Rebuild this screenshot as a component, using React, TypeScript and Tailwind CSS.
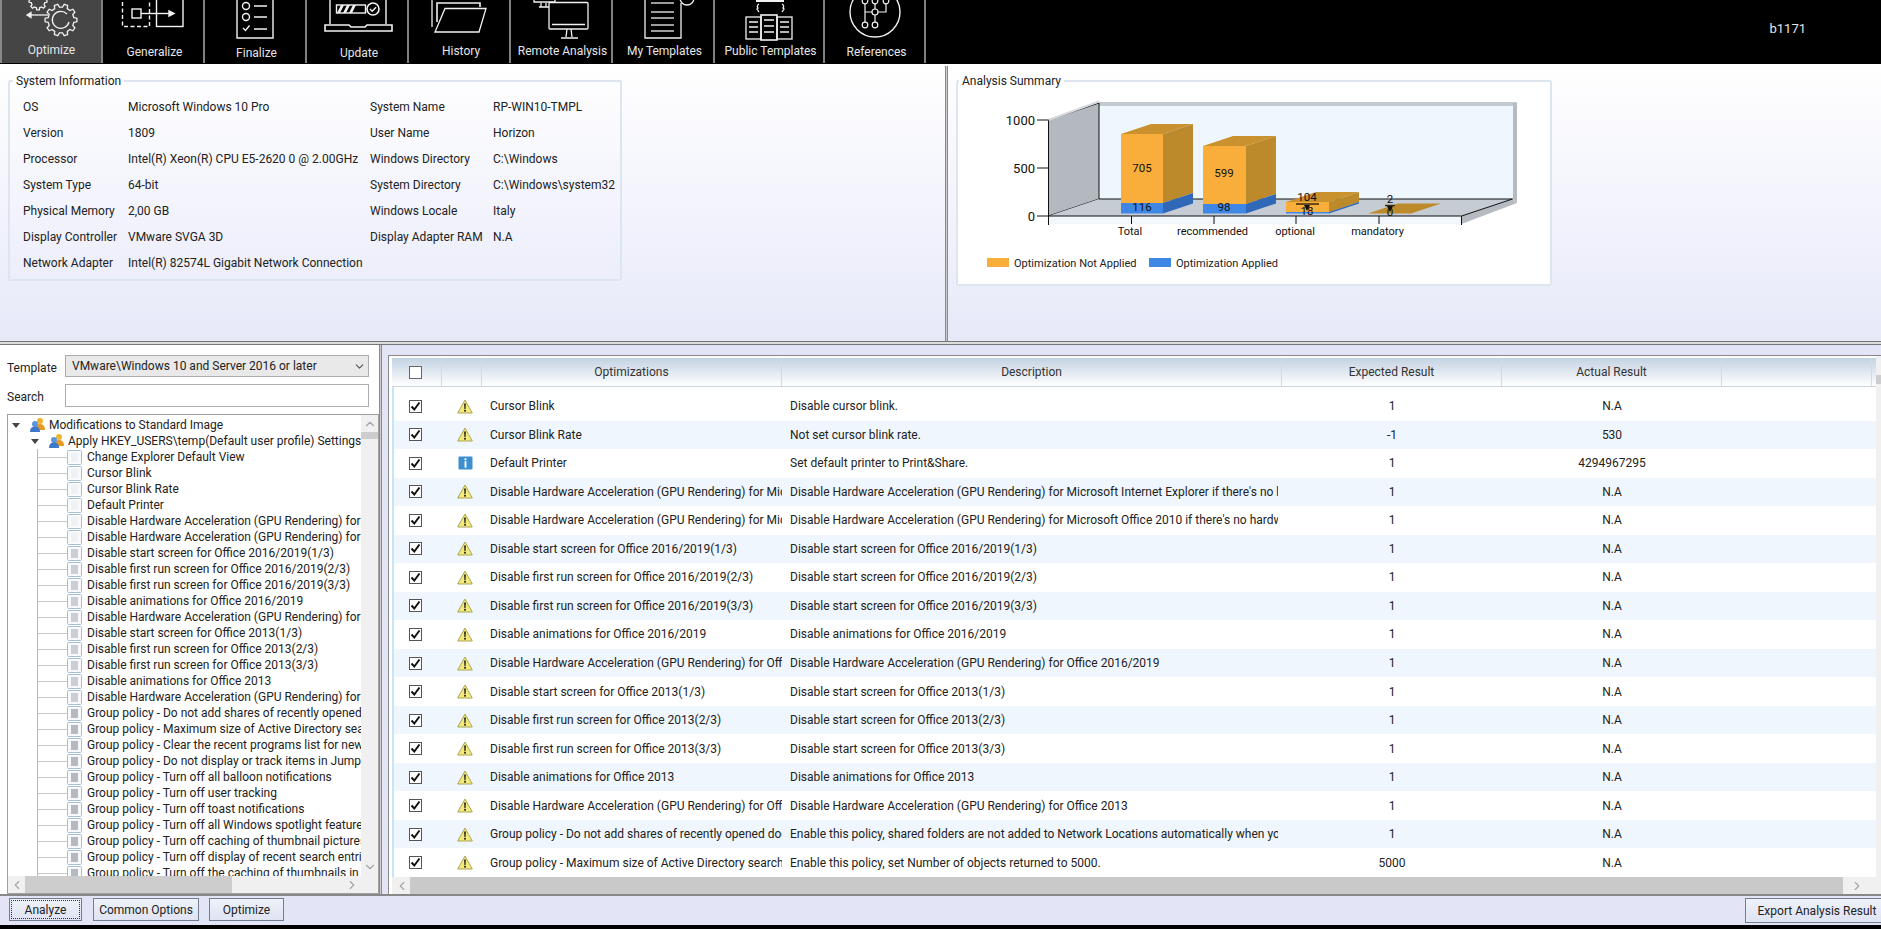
import React from 'react';
import { ChevronDown, ChevronLeft, ChevronRight, ChevronUp } from 'lucide-react';

// outline of a cog wheel, teeth drawn as steps between two radii
function gearPath(cx: number, cy: number, outer: number, inner: number, teeth: number) {
  const pts: string[] = [];
  const step = (Math.PI * 2) / teeth;
  for (let i = 0; i < teeth; i++) {
    const a = i * step;
    const list: [number, number][] = [
      [inner, a - step * 0.3],
      [outer, a - step * 0.18],
      [outer, a + step * 0.18],
      [inner, a + step * 0.3],
    ];
    list.forEach(([r, t]) => pts.push(`${(cx + r * Math.cos(t)).toFixed(1)},${(cy + r * Math.sin(t)).toFixed(1)}`));
  }
  return 'M' + pts.join('L') + 'Z';
}

function IconOptimize() {
  return (
    <svg viewBox="2 0 100 42" className="h-[42px] w-[100px]" fill="none" stroke="#f2f2f2" strokeWidth="1.3">
      <path d={gearPath(61, 20, 16, 13, 10)} />
      <path d="M67 14a8.500 8.500 0 1 0 2 8" />
      <path d={gearPath(38, 1, 9, 7, 8)} />
      <path d="M48 15H30" />
      <path d="M31 12.500l-4 2.500 4 2.500z" fill="#f2f2f2" />
    </svg>
  );
}

function IconGeneralize() {
  return (
    <svg viewBox="103 0 102 42" className="h-[42px] w-[102px]" fill="none" stroke="#f2f2f2" strokeWidth="1.4">
      <rect x="123.500" y="-3" width="27" height="29.500" strokeDasharray="4 2.500" />
      <rect x="133" y="9" width="9" height="9" />
      <rect x="157.500" y="-3" width="26.500" height="29.500" />
      <path d="M142 13.500h29" />
      <path d="M170 11l5 2.500-5 2.500z" fill="#f2f2f2" />
    </svg>
  );
}

function IconFinalize() {
  return (
    <svg viewBox="205 0 102 42" className="h-[42px] w-[102px]" fill="none" stroke="#f2f2f2" strokeWidth="1.4">
      <path d="M238 -3V38H274V-3" />
      <circle cx="247" cy="6" r="3.500" />
      <circle cx="247" cy="17" r="3.500" />
      <path d="M244 28l2.500 2.500 4-5" />
      <path d="M255 6h13M255 17h13M255 29h13" />
    </svg>
  );
}

function IconUpdate() {
  return (
    <svg viewBox="307 0 102 42" className="h-[42px] w-[102px]" fill="none" stroke="#f2f2f2" strokeWidth="1.4">
      <path d="M331 -2V24M387 -2V24" />
      <path d="M326 25h24l2 2h14l2-2h25v6h-67z" strokeWidth="1.6" />
      <rect x="337.500" y="5" width="29" height="8" />
      <path d="M338 13l4-8h3l-4 8zM344 13l4-8h3l-4 8zM350 13l4-8h3l-4 8z" fill="#f2f2f2" stroke="none" />
      <circle cx="374" cy="9" r="6" strokeWidth="1.6" />
      <path d="M371 9l2.200 2.200 3.800-4" />
    </svg>
  );
}

function IconHistory() {
  return (
    <svg viewBox="409 0 102 42" className="h-[42px] w-[102px]" fill="none" stroke="#f2f2f2" strokeWidth="1.3">
      <path d="M433 -2V27" />
      <path d="M438 22V3H481V7" strokeWidth="1.6" />
      <path d="M446 8.500H487L480 32H436z" />
    </svg>
  );
}

function IconRemote() {
  return (
    <svg viewBox="511 0 102 42" className="h-[42px] w-[102px]" fill="none" stroke="#f2f2f2" strokeWidth="1.3">
      <path d="M535 -1V2H556V-1" />
      <path d="M542 3v4M547 3v4M540 7h10" />
      <rect x="550" y="2.500" width="39" height="26.500" rx="1" />
      <path d="M553 24.500h33" />
      <path d="M568 29l-1 8M572 29l1 8M562 38h17" />
    </svg>
  );
}

function IconMyTemplates() {
  return (
    <svg viewBox="613 0 102 42" className="h-[42px] w-[102px]" fill="none" stroke="#f2f2f2" strokeWidth="1.3">
      <path d="M646 -2V38H682V3" />
      <path d="M652 3h23M652 12h23M652 18h23M652 25h23M652 31h23" stroke="#cfcfcf" strokeWidth="1.6" />
      <circle cx="688" cy="-2" r="7" />
    </svg>
  );
}

function IconPublicTemplates() {
  return (
    <svg viewBox="715 0 110 42" className="h-[42px] w-[110px]" fill="none" stroke="#f2f2f2" strokeWidth="1.3">
      <path d="M757 1h28" strokeWidth="2" />
      <path d="M760 4c-2 1-2 3-1 4l-1 1 2 3M783 4c2 1 2 3 1 4l1 1-2 3" />
      <rect x="747" y="17" width="15" height="22" />
      <rect x="778" y="17" width="15" height="22" />
      <rect x="762" y="15" width="16" height="25" strokeWidth="1.6" />
      <path d="M750 22h9M750 27h9M750 32h9M781 22h9M781 27h9M781 32h9M765 20h10M765 26h10M765 32h10" strokeWidth="1.4" />
    </svg>
  );
}

function IconReferences() {
  return (
    <svg viewBox="825 0 101 42" className="h-[42px] w-[101px]" fill="none" stroke="#f2f2f2" strokeWidth="1.2">
      <circle cx="876" cy="12" r="25" strokeWidth="1.4" />
      <circle cx="866" cy="1" r="2.800" />
      <circle cx="876" cy="1" r="2.800" />
      <circle cx="887" cy="1" r="2.800" />
      <circle cx="876" cy="12" r="3" />
      <circle cx="866" cy="25" r="2.800" />
      <circle cx="876" cy="25" r="2.800" />
      <path d="M866 4v18M876 4v5M876 15v7M866 12h7M879 12h8V4" />
    </svg>
  );
}

const tabs = [
  { label: 'Optimize', Icon: IconOptimize, cls: 'w-[103px] border-l-2 border-l-[#888] bg-[#454545]', labelCls: 'mt-0' },
  { label: 'Generalize', Icon: IconGeneralize, cls: 'w-[102px]', labelCls: 'ml-[3px] mt-[2px]' },
  { label: 'Finalize', Icon: IconFinalize, cls: 'w-[102px]', labelCls: 'ml-[3px] mt-[3px]' },
  { label: 'Update', Icon: IconUpdate, cls: 'w-[102px]', labelCls: 'ml-[4px] mt-[3px]' },
  { label: 'History', Icon: IconHistory, cls: 'w-[102px]', labelCls: 'ml-[4px] mt-px' },
  { label: 'Remote Analysis', Icon: IconRemote, cls: 'w-[102px]', labelCls: 'ml-[3px] mt-px' },
  { label: 'My Templates', Icon: IconMyTemplates, cls: 'w-[102px]', labelCls: 'ml-[3px] mt-px' },
  { label: 'Public Templates', Icon: IconPublicTemplates, cls: 'w-[110px]', labelCls: 'ml-[3px] mt-px' },
  { label: 'References', Icon: IconReferences, cls: 'w-[101px]', labelCls: 'ml-[4px] mt-[2px]' },
];

const sysLeft = [
  ['OS', 'Microsoft Windows 10 Pro'],
  ['Version', '1809'],
  ['Processor', 'Intel(R) Xeon(R) CPU E5-2620 0 @ 2.00GHz'],
  ['System Type', '64-bit'],
  ['Physical Memory', '2,00 GB'],
  ['Display Controller', 'VMware SVGA 3D'],
  ['Network Adapter', 'Intel(R) 82574L Gigabit Network Connection'],
];

const sysRight = [
  ['System Name', 'RP-WIN10-TMPL'],
  ['User Name', 'Horizon'],
  ['Windows Directory', 'C:\\Windows'],
  ['System Directory', 'C:\\Windows\\system32'],
  ['Windows Locale', 'Italy'],
  ['Display Adapter RAM', 'N.A'],
];

const treeItems = [
  'Change Explorer Default View',
  'Cursor Blink',
  'Cursor Blink Rate',
  'Default Printer',
  'Disable Hardware Acceleration (GPU Rendering) for Microsoft Internet Explorer',
  'Disable Hardware Acceleration (GPU Rendering) for Microsoft Office 2010',
  'Disable start screen for Office 2016/2019(1/3)',
  'Disable first run screen for Office 2016/2019(2/3)',
  'Disable first run screen for Office 2016/2019(3/3)',
  'Disable animations for Office 2016/2019',
  'Disable Hardware Acceleration (GPU Rendering) for Office 2016/2019',
  'Disable start screen for Office 2013(1/3)',
  'Disable first run screen for Office 2013(2/3)',
  'Disable first run screen for Office 2013(3/3)',
  'Disable animations for Office 2013',
  'Disable Hardware Acceleration (GPU Rendering) for Office 2013',
  'Group policy - Do not add shares of recently opened documents',
  'Group policy - Maximum size of Active Directory searches',
  'Group policy - Clear the recent programs list for new users',
  'Group policy - Do not display or track items in Jump Lists',
  'Group policy - Turn off all balloon notifications',
  'Group policy - Turn off user tracking',
  'Group policy - Turn off toast notifications',
  'Group policy - Turn off all Windows spotlight features',
  'Group policy - Turn off caching of thumbnail pictures',
  'Group policy - Turn off display of recent search entries',
  'Group policy - Turn off the caching of thumbnails in hidden files',
];

const dha = 'Disable Hardware Acceleration (GPU Rendering) for ';
const rows = [
  ['Cursor Blink', 'Disable cursor blink.', '1', 'N.A'],
  ['Cursor Blink Rate', 'Not set cursor blink rate.', '-1', '530'],
  ['Default Printer', 'Set default printer to Print&Share.', '1', '4294967295', 'info'],
  [dha + 'Microsoft Internet Explorer', dha + "Microsoft Internet Explorer if there's no hardware GPU", '1', 'N.A'],
  [dha + 'Microsoft Office 2010', dha + "Microsoft Office 2010 if there's no hardware GPU present", '1', 'N.A'],
  ['Disable start screen for Office 2016/2019(1/3)', 'Disable start screen for Office 2016/2019(1/3)', '1', 'N.A'],
  ['Disable first run screen for Office 2016/2019(2/3)', 'Disable start screen for Office 2016/2019(2/3)', '1', 'N.A'],
  ['Disable first run screen for Office 2016/2019(3/3)', 'Disable start screen for Office 2016/2019(3/3)', '1', 'N.A'],
  ['Disable animations for Office 2016/2019', 'Disable animations for Office 2016/2019', '1', 'N.A'],
  [dha + 'Office 2016/2019', dha + 'Office 2016/2019', '1', 'N.A'],
  ['Disable start screen for Office 2013(1/3)', 'Disable start screen for Office 2013(1/3)', '1', 'N.A'],
  ['Disable first run screen for Office 2013(2/3)', 'Disable start screen for Office 2013(2/3)', '1', 'N.A'],
  ['Disable first run screen for Office 2013(3/3)', 'Disable start screen for Office 2013(3/3)', '1', 'N.A'],
  ['Disable animations for Office 2013', 'Disable animations for Office 2013', '1', 'N.A'],
  [dha + 'Office 2013', dha + 'Office 2013', '1', 'N.A'],
  ['Group policy - Do not add shares of recently opened documents', 'Enable this policy, shared folders are not added to Network Locations automatically when you open', '1', 'N.A'],
  ['Group policy - Maximum size of Active Directory searches', 'Enable this policy, set Number of objects returned to 5000.', '5000', 'N.A'],
];

function Warn() {
  return (
    <svg viewBox="0 0 16 15" className="h-[15px] w-[16px]">
      <path d="M8 1 L15.300 14 H.7Z" fill="#f4ea7c" stroke="#a9a657" strokeWidth="1" strokeLinejoin="round" />
      <path d="M7.100 4.500h1.800l-.3 5.500h-1.200z" fill="#222" />
      <rect x="7.100" y="10.800" width="1.800" height="1.800" fill="#222" />
    </svg>
  );
}

function Info() {
  return (
    <svg viewBox="0 0 15 15" className="h-[14px] w-[15px]">
      <rect width="15" height="14" y=".5" rx="1" fill="#3d8fd0" />
      <rect x="6.500" y="2.500" width="2" height="2" fill="#fff" />
      <rect x="6.500" y="5.500" width="2" height="7" fill="#fff" />
    </svg>
  );
}

function CheckBox({ checked }: { checked?: boolean }) {
  return (
    <div className={'flex h-[13px] w-[13px] items-center justify-center border ' + (checked ? 'border-[#555] bg-white' : 'border-[#666] bg-white')}>
      {checked && (
        <svg viewBox="0 0 11 11" className="h-[11px] w-[11px]" fill="none" stroke="#111" strokeWidth="2">
          <path d="M1.500 5.500l2.800 3L9.500 1.500" />
        </svg>
      )}
    </div>
  );
}

function TreeDoc({ n }: { n: number }) {
  // the centre square gets a bit darker further down the list, like the original bitmap fading
  const inner = n < 6 ? '#eef1f5' : n < 16 ? '#c9cfd6' : '#b3bac2';
  return (
    <svg viewBox="0 0 15 15" className="h-[15px] w-[15px] shrink-0">
      <rect x=".5" y=".5" width="14" height="14" rx="1" fill="#f7f9fb" stroke="#a8bfd4" />
      <rect x="4" y="3" width="7" height="9" fill={inner} />
    </svg>
  );
}

function TreeGroup() {
  return (
    <svg viewBox="0 0 15 16" className="h-[16px] w-[15px] shrink-0">
      <circle cx="10" cy="4" r="3" fill="#f1b32f" />
      <path d="M5 13c0-4 2-6 5-6s5 2 5 6z" fill="#e79a1f" />
      <circle cx="5" cy="7" r="3" fill="#5b97e0" />
      <path d="M0 15c0-4 2-5.500 5-5.500s5 1.500 5 5.500z" fill="#3f78c8" />
    </svg>
  );
}

function Arrow() {
  return (
    <svg viewBox="0 0 8 5" className="h-[5px] w-[8px] shrink-0">
      <path d="M0 0h8L4 5z" fill="#444" />
    </svg>
  );
}

function Btn({ children, cls }: { children: React.ReactNode; cls: string }) {
  return (
    <button className={'flex h-[23px] items-center justify-center border border-[#6f7f90] bg-gradient-to-b from-[#eef2f9] to-[#dfe3f3] text-[12px] text-[#222] ' + cls}>
      {children}
    </button>
  );
}

function BarChart() {
  const orange = '#f9ae3b';
  const orangeSide = '#bd8a2b';
  const orangeTop = '#c9922f';
  const blue = '#3f87e5';
  const blueSide = '#3068b8';
  const bars = [
    { x: 1121, w: 42, top: 134, mid: 203 },
    { x: 1203, w: 43, top: 146, mid: 204 },
    { x: 1286, w: 43, top: 202, mid: 212 },
  ];
  const bottom = 213.5;
  const dx = 30;
  const dy = 10;
  return (
    <svg viewBox="958 89 590 195" className="h-[195px] w-[590px] text-[#111]">
      <path d="M1048.500 216H1461.500V224H1048.500z" fill="#f1f7fd" />
      <rect x="1099" y="103" width="414" height="96" fill="#eff7fe" />
      <path d="M1099 102H1517V106H1099z" fill="#c4cad1" />
      <path d="M1513 103h4v100l-4-4z" fill="#b6bbc1" />
      <path d="M1048.500 120L1099 103V199L1048.500 216z" fill="#b4b9bf" stroke="#111" strokeWidth="1" />
      <path d="M1048.500 120L1099 101.500" stroke="#d5d8dc" strokeWidth="2" />
      <path d="M1048.500 216L1099 199H1512.500L1461.500 216z" fill="#c6ccd4" />
      <path d="M1461.500 216L1512.500 199L1517 203L1461.500 224z" fill="#b6bbc1" />
      <path d="M1099 199H1512.500L1461.500 216H1048.500" fill="none" stroke="#111" strokeWidth="1" />
      <path d="M1037 120h11.500M1037 168h11.500M1037 216h11.500M1048.500 216v9M1131.500 216v8M1214 216v8M1296 216v8M1379 216v8M1461.500 216v9" stroke="#111" strokeWidth="1" />
      {bars.map((b) => (
        <g key={b.x}>
          <path d={`M${b.x} ${b.top}l${dx} ${-dy}h${b.w}l${-dx} ${dy}z`} fill={orangeTop} />
          <path d={`M${b.x + b.w} ${b.top}l${dx} ${-dy}V${b.mid - dy}l${-dx} ${dy}z`} fill={orangeSide} />
          <rect x={b.x} y={b.top} width={b.w} height={b.mid - b.top} fill={orange} />
          <path d={`M${b.x + b.w} ${b.mid}l${dx} ${-dy}V${bottom - dy}l${-dx} ${dy}z`} fill={blueSide} />
          <rect x={b.x} y={b.mid} width={b.w} height={bottom - b.mid} fill={blue} />
        </g>
      ))}
      <path d="M1368 213.500H1411L1441 203.500H1398z" fill={orangeSide} />
      <path d="M1296 204h23" stroke="#3a2a0a" strokeWidth="1.500" />
      <path d="M1304 205h6l-3 6z" fill="#111" />
      <path d="M1385 205.500h10" stroke="#3a2a0a" strokeWidth="1.500" />
      <path d="M1387 206h6l-3 6z" fill="#111" />
      <g textAnchor="middle" fill="#111" fontSize="11.500">
        <text x="1142" y="172">705</text>
        <text x="1142" y="211">116</text>
        <text x="1224" y="177">599</text>
        <text x="1224" y="211">98</text>
        <text x="1307" y="201">104</text>
        <text x="1307" y="215">18</text>
        <text x="1390" y="203">2</text>
        <text x="1390" y="216">0</text>
        <text x="1130" y="235" fontSize="11">Total</text>
        <text x="1212.500" y="235" fontSize="11">recommended</text>
        <text x="1295" y="235" fontSize="11">optional</text>
        <text x="1377.500" y="235" fontSize="11">mandatory</text>
      </g>
      <g textAnchor="end" fill="#111" fontSize="13">
        <text x="1035" y="125">1000</text>
        <text x="1035" y="173">500</text>
        <text x="1035" y="221">0</text>
      </g>
      <rect x="987" y="258" width="22" height="9" fill={orange} />
      <text x="1014" y="267" fill="#222" fontSize="11">Optimization Not Applied</text>
      <rect x="1149" y="258" width="22" height="9" fill={blue} />
      <text x="1176" y="267" fill="#222" fontSize="11">Optimization Applied</text>
    </svg>
  );
}

export default function App() {
  return (
    <div className="flex h-[929px] w-[1881px] flex-col overflow-hidden bg-black font-[Roboto,sans-serif] text-[12px] text-[#222]">
      {/* toolbar, icons are cut off by the top edge in the original as well */}
      <div className="flex h-[64px] shrink-0 bg-black pb-px">
        {tabs.map(({ label, Icon, cls, labelCls }) => (
          <div key={label} className={'flex h-full shrink-0 flex-col items-center overflow-hidden border-r-2 border-r-[#808080] ' + cls}>
            <div className="h-[42px] shrink-0">
              <Icon />
            </div>
            <div className={'text-[12px] leading-4 text-[#e6e6e6] ' + labelCls}>{label}</div>
          </div>
        ))}
        <div className="flex flex-1 justify-end pr-[75px] pt-[19px] text-[13px] text-[#e6e6e6]">b1171</div>
      </div>

      {/* top half */}
      <div className="flex h-[277px] shrink-0 bg-gradient-to-b from-white to-[#e7e9f9]">
        <div className="w-[945px] shrink-0 pl-[8px] pt-[9px]">
          <fieldset className="h-[208px] w-[614px] rounded-[2px] border-2 border-[#dde6ee]">
            <legend className="ml-[3px] px-[3px] leading-4">System Information</legend>
            <div className="flex pl-[13px] pt-[5px]">
              <div className="grid w-[347px] shrink-0 auto-rows-[26px] grid-cols-[105px_1fr] items-center">
                {sysLeft.map(([k, v]) => (
                  <React.Fragment key={k}>
                    <span className="whitespace-nowrap">{k}</span>
                    <span className="whitespace-nowrap">{v}</span>
                  </React.Fragment>
                ))}
              </div>
              <div className="grid auto-rows-[26px] grid-cols-[123px_1fr] items-center">
                {sysRight.map(([k, v]) => (
                  <React.Fragment key={k}>
                    <span className="whitespace-nowrap">{k}</span>
                    <span className="whitespace-nowrap">{v}</span>
                  </React.Fragment>
                ))}
              </div>
            </div>
          </fieldset>
        </div>
        <div className="mt-[2px] w-[3px] shrink-0 border-x border-[#8a8a8a] bg-[#ccc]" />
        <div className="flex-1 pl-[8px] pt-[9px]">
          <fieldset className="h-[213px] w-[596px] rounded-[2px] border-2 border-[#dde6ee] bg-white">
            <legend className="ml-[1px] px-[3px] leading-4">Analysis Summary</legend>
            <BarChart />
          </fieldset>
        </div>
      </div>

      {/* horizontal splitter */}
      <div className="h-[4px] shrink-0 border-y border-[#777] bg-[#ddd]" />

      {/* bottom half */}
      <div className="flex min-h-0 flex-1">
        <div className="flex w-[379px] shrink-0 flex-col bg-white pl-[7px]">
          <div className="flex items-center pt-[10px]">
            <span className="mt-[3px] w-[58px] shrink-0">Template</span>
            <div className="flex h-[22px] w-[304px] items-center justify-between border border-[#acacac] bg-[#e9e9e9] pl-[6px] pr-[2px]">
              <span>VMware\Windows 10 and Server 2016 or later</span>
              <ChevronDown size={13} className="text-[#555]" />
            </div>
          </div>
          <div className="flex items-center pt-[7px]">
            <span className="mt-[3px] w-[58px] shrink-0">Search</span>
            <input className="h-[23px] w-[304px] border border-[#abadb3] bg-white" />
          </div>
          <div className="mt-[7px] flex min-h-0 flex-1 flex-col border border-[#a0a0a0]">
            <div className="flex min-h-0 flex-1">
              <div className="min-w-0 flex-1 overflow-hidden pt-[2px]">
                <div className="flex h-[16px] items-center whitespace-nowrap pl-[4px]">
                  <Arrow />
                  <span className="ml-[10px] mr-[4px] flex"><TreeGroup /></span>
                  Modifications to Standard Image
                </div>
                <div className="flex h-[16px] items-center whitespace-nowrap pl-[23px]">
                  <Arrow />
                  <span className="ml-[10px] mr-[4px] flex"><TreeGroup /></span>
                  Apply HKEY_USERS\temp(Default user profile) Settings
                </div>
                <div className="ml-[29px] border-l border-[#b8b8b8]">
                  {treeItems.map((t, i) => (
                    <div key={t} className="flex h-[16px] items-center whitespace-nowrap">
                      <span className="h-px w-[29px] shrink-0 bg-[#c8c8c8]" />
                      <TreeDoc n={i} />
                      <span className="ml-[5px]">{t}</span>
                    </div>
                  ))}
                </div>
              </div>
              <div className="flex w-[17px] shrink-0 flex-col items-center justify-between bg-[#f0f0f0] py-[2px]">
                <div className="w-full">
                  <ChevronUp size={14} className="mx-auto text-[#a5a5a5]" />
                  <div className="mt-px h-[7px] w-full bg-[#cdcdcd]" />
                </div>
                <ChevronDown size={14} className="text-[#a5a5a5]" />
              </div>
            </div>
            <div className="flex h-[17px] shrink-0 items-center bg-[#f0f0f0]">
              <ChevronLeft size={14} className="ml-[2px] text-[#a5a5a5]" />
              <div className="ml-[1px] h-full w-[207px] bg-[#cdcdcd]" />
              <div className="flex-1" />
              <ChevronRight size={14} className="mr-[19px] text-[#a5a5a5]" />
            </div>
          </div>
        </div>
        <div className="w-[3px] shrink-0 border-x border-[#8a8a8a] bg-[#ccc]" />
        <div className="flex min-w-0 flex-1 flex-col bg-[#e3e5f7] pl-[6px] pt-[10px]">
          <div className="flex min-h-0 flex-1 border-l border-t border-[#888] bg-white">
            <div className="flex min-w-0 flex-1 flex-col pl-[3px] pt-[2px]">
              <div className="grid h-[29px] shrink-0 grid-cols-[50px_40px_300px_500px_220px_220px_150px] border-b border-[#ccd5dd] bg-gradient-to-b from-[#c3d2e2] to-white text-[#333]">
                <div className="flex items-center justify-center border-r border-[#d2dae2] pr-[2px]"><CheckBox /></div>
                <div className="border-r border-[#d2dae2]" />
                <div className="flex items-center justify-center border-r border-[#d2dae2]">Optimizations</div>
                <div className="flex items-center justify-center border-r border-[#d2dae2]">Description</div>
                <div className="flex items-center justify-center border-r border-[#d2dae2]">Expected Result</div>
                <div className="flex items-center justify-center border-r border-[#d2dae2]">Actual Result</div>
                <div className="border-r border-[#d2dae2]" />
              </div>
              <div className="flex min-h-0 flex-1 border-l-2 border-[#c6e6f8] pt-[5px]">
                <div className="grid min-w-0 flex-1 auto-rows-fr">
                  {rows.map((r, i) => (
                    <div key={i} className={'grid grid-cols-[48px_40px_300px_500px_220px_220px_1fr] items-center ' + (i % 2 === 1 ? 'bg-[#eff6fd]' : 'bg-white')}>
                      <div className="flex justify-center pr-[6px]"><CheckBox checked /></div>
                      <div className="flex justify-center pl-[6px]">{r[4] === 'info' ? <Info /> : <Warn />}</div>
                      <div className="ml-[8px] overflow-hidden whitespace-nowrap">{r[0]}</div>
                      <div className="ml-[8px] mr-[4px] overflow-hidden whitespace-nowrap">{r[1]}</div>
                      <div className="text-center">{r[2]}</div>
                      <div className="text-center">{r[3]}</div>
                      <div />
                    </div>
                  ))}
                </div>
              </div>
              <div className="flex h-[17px] shrink-0 items-center bg-[#f0f0f0]">
                <ChevronLeft size={14} className="ml-[3px] text-[#a5a5a5]" />
                <div className="ml-[1px] h-full flex-1 bg-[#c9c9c9]" />
                <ChevronRight size={14} className="mx-[7px] text-[#a5a5a5]" />
                <div className="w-[5px]" />
              </div>
            </div>
            <div className="w-[5px] shrink-0 bg-[#f0f0f0] pt-[19px]">
              <div className="h-[9px] bg-[#cdcdcd]" />
            </div>
          </div>
        </div>
      </div>

      {/* bottom action bar */}
      <div className="h-[2px] shrink-0 bg-[#888]" />
      <div className="flex h-[29px] shrink-0 items-start justify-between bg-[#e3e5f7] pt-[2px]">
        <div className="flex gap-[10px] pl-[9px]">
          <Btn cls="w-[73px] outline-1 -outline-offset-3 outline-dotted outline-[#333]">Analyze</Btn>
          <Btn cls="ml-[1px] w-[106px]">Common Options</Btn>
          <Btn cls="w-[75px]">Optimize</Btn>
        </div>
        <Btn cls="w-[136px] !h-[25px] border-r-0 pl-[7px] whitespace-nowrap">Export Analysis Result</Btn>
      </div>
      <div className="h-[4px] shrink-0 bg-black" />
    </div>
  );
}
